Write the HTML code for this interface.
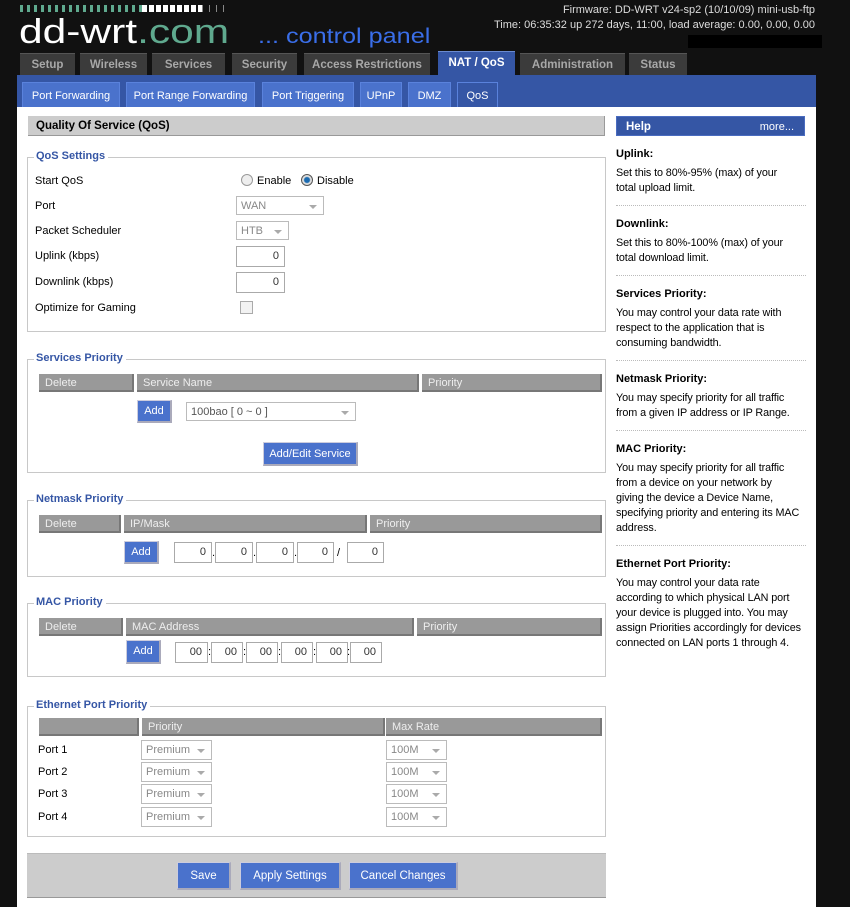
<!DOCTYPE html>
<html><head><meta charset="utf-8"><style>
*{box-sizing:border-box;margin:0;padding:0}
body{width:850px;height:907px;background:#111;font-family:"Liberation Sans",sans-serif;font-size:11px;color:#000;position:relative;overflow:hidden}
.a{position:absolute}
.tab{position:absolute;top:53px;height:22px;background:#3b3b3b;color:#a8a8a8;font-weight:bold;font-size:11.5px;text-align:center;line-height:23px;border-top:1px solid #555}
.sub{position:absolute;top:82px;height:25px;background:#4a72cc;color:#fff;font-size:11px;text-align:center;line-height:26px;border:1px solid #5a82dc;border-bottom:none}
.fs{position:absolute;border:1px solid #c8c8c8;left:27px;width:579px}
.lg{position:absolute;top:-8px;left:6px;background:#fff;padding:0 3px 0 2px;color:#3556a5;font-weight:bold;font-size:11px}
.th{position:absolute;height:18px;background:#999;color:#eee;font-size:11px;line-height:18px;padding-left:6px;border-right:2px solid #777;border-bottom:2px solid #777}
.btn{position:absolute;background:#4a72cc;color:#fff;font-size:11px;text-align:center;border-right:2px solid #aab;border-bottom:2px solid #aab;border-top:1px solid #ccd;border-left:1px solid #ccd}
.inp{position:absolute;border:1px solid #aaa;background:#fff;text-align:right;padding-right:5px;font-size:11px;line-height:19px;color:#333}
.sel{position:absolute;border:1px solid #bbb;background:#fff;color:#888;font-size:11px;padding-left:4px;line-height:18px}
.sel:after{content:"";position:absolute;right:6px;top:8px;border-left:4px solid transparent;border-right:4px solid transparent;border-top:4px solid #aaa}
.lbl{position:absolute;left:35px;font-size:11px}
.hh{position:absolute;left:616px;font-weight:bold;font-size:11px}
.ht{position:absolute;left:616px;font-size:10.8px;line-height:15px;width:200px;letter-spacing:-0.1px}
.dot{position:absolute;left:616px;width:190px;border-top:1px dotted #bbb}
</style></head><body>
<!-- logo -->
<div class="a" style="left:20px;top:5px;width:122px;height:7px;background:repeating-linear-gradient(90deg,#5fa98e 0 3px,transparent 3px 7px)"></div>
<div class="a" style="left:142px;top:5px;width:60px;height:7px;background:repeating-linear-gradient(90deg,#fff 0 5px,transparent 5px 7px)"></div>
<div class="a" style="left:202px;top:5px;width:24px;height:7px;background:repeating-linear-gradient(90deg,#888 0 1px,transparent 1px 7px)"></div>
<div class="a" style="left:19px;top:15px;font-size:34px;line-height:34px;color:#fff;transform:scaleX(1.25);transform-origin:left;white-space:nowrap">dd-wrt<span style="color:#5fa98e">.com</span></div>
<div class="a" style="left:258px;top:25px;font-size:21px;line-height:24px;color:#3a6ee8;transform:scaleX(1.2);transform-origin:left;white-space:nowrap">... control panel</div>
<div class="a" style="right:35px;top:3px;color:#ddd;font-size:11px;text-align:right;line-height:15px">Firmware: DD-WRT v24-sp2 (10/10/09) mini-usb-ftp<br>Time: 06:35:32 up 272 days, 11:00, load average: 0.00, 0.00, 0.00</div>
<div class="a" style="left:688px;top:35px;width:134px;height:13px;background:#000"></div>
<!-- tabs -->
<div class="tab" style="left:20px;width:55px">Setup</div>
<div class="tab" style="left:80px;width:67px">Wireless</div>
<div class="tab" style="left:152px;width:73px">Services</div>
<div class="tab" style="left:232px;width:65px">Security</div>
<div class="tab" style="left:304px;width:126px">Access Restrictions</div>
<div class="tab" style="left:438px;width:77px;top:51px;height:25px;background:#3556a5;color:#fff;border-top:1px solid #6a8ad0">NAT / QoS</div>
<div class="tab" style="left:520px;width:105px">Administration</div>
<div class="tab" style="left:629px;width:58px">Status</div>
<div class="a" style="left:17px;top:75px;width:799px;height:32px;background:#3556a5"></div>
<div class="sub" style="left:22px;width:98px">Port Forwarding</div>
<div class="sub" style="left:126px;width:129px">Port Range Forwarding</div>
<div class="sub" style="left:262px;width:92px">Port Triggering</div>
<div class="sub" style="left:360px;width:42px">UPnP</div>
<div class="sub" style="left:408px;width:43px">DMZ</div>
<div class="sub" style="left:457px;width:41px;background:#3556a5">QoS</div>
<!-- content -->
<div class="a" style="left:17px;top:107px;width:799px;height:800px;background:#fff"></div>
<div class="a" style="left:28px;top:116px;width:577px;height:20px;background:#ccc;border-right:1px solid #999;border-bottom:1px solid #999;font-weight:bold;font-size:11.5px;line-height:20px;padding-left:8px">Quality Of Service (QoS)</div>
<div class="a" style="left:616px;top:116px;width:189px;height:20px;background:#3556a5;color:#fff;line-height:20px;padding-left:9px;font-weight:bold;font-size:11.5px;border:1px solid #4a6cc0">Help<span style="position:absolute;right:10px;font-weight:normal;font-size:11px">more...</span></div>

<!-- QoS Settings -->
<div class="fs" style="top:157px;height:175px"><div class="lg">QoS Settings</div></div>
<div class="lbl" style="top:175px">Start QoS</div>
<div class="a" style="left:241px;top:174px;width:12px;height:12px;border-radius:50%;border:1px solid #999;background:#eee"></div>
<div class="a" style="left:257px;top:175px">Enable</div>
<div class="a" style="left:301px;top:174px;width:12px;height:12px;border-radius:50%;border:1px solid #555;background:radial-gradient(#1a6ab0 0 2.5px,#ddd 3.5px)"></div>
<div class="a" style="left:317px;top:175px">Disable</div>
<div class="lbl" style="top:200px">Port</div>
<div class="sel" style="left:236px;top:196px;width:88px;height:19px">WAN</div>
<div class="lbl" style="top:225px">Packet Scheduler</div>
<div class="sel" style="left:236px;top:221px;width:53px;height:19px">HTB</div>
<div class="lbl" style="top:250px">Uplink (kbps)</div>
<div class="inp" style="left:236px;top:246px;width:49px;height:21px">0</div>
<div class="lbl" style="top:276px">Downlink (kbps)</div>
<div class="inp" style="left:236px;top:272px;width:49px;height:21px">0</div>
<div class="lbl" style="top:302px">Optimize for Gaming</div>
<div class="a" style="left:240px;top:301px;width:13px;height:13px;border:1px solid #aaa;background:#f2f2f2"></div>

<!-- Services Priority -->
<div class="fs" style="top:359px;height:114px"><div class="lg">Services Priority</div></div>
<div class="th" style="left:39px;top:374px;width:95px">Delete</div>
<div class="th" style="left:137px;top:374px;width:282px">Service Name</div>
<div class="th" style="left:422px;top:374px;width:180px">Priority</div>
<div class="btn" style="left:137px;top:400px;width:35px;height:23px;line-height:20px">Add</div>
<div class="sel" style="left:186px;top:402px;width:170px;height:19px;color:#555">100bao [ 0 ~ 0 ]</div>
<div class="btn" style="left:263px;top:442px;width:95px;height:24px;line-height:22px">Add/Edit Service</div>

<!-- Netmask -->
<div class="fs" style="top:500px;height:77px"><div class="lg">Netmask Priority</div></div>
<div class="th" style="left:39px;top:515px;width:82px">Delete</div>
<div class="th" style="left:124px;top:515px;width:243px">IP/Mask</div>
<div class="th" style="left:370px;top:515px;width:232px">Priority</div>
<div class="btn" style="left:124px;top:541px;width:35px;height:23px;line-height:20px">Add</div>
<div class="inp" style="left:174px;top:542px;width:38px;height:21px">0</div><div class="a" style="left:212px;top:547px">.</div>
<div class="inp" style="left:215px;top:542px;width:38px;height:21px">0</div><div class="a" style="left:253px;top:547px">.</div>
<div class="inp" style="left:256px;top:542px;width:38px;height:21px">0</div><div class="a" style="left:294px;top:547px">.</div>
<div class="inp" style="left:297px;top:542px;width:37px;height:21px">0</div><div class="a" style="left:337px;top:547px">/</div>
<div class="inp" style="left:347px;top:542px;width:37px;height:21px">0</div>

<!-- MAC -->
<div class="fs" style="top:603px;height:74px"><div class="lg">MAC Priority</div></div>
<div class="th" style="left:39px;top:618px;width:84px">Delete</div>
<div class="th" style="left:126px;top:618px;width:288px">MAC Address</div>
<div class="th" style="left:417px;top:618px;width:185px">Priority</div>
<div class="btn" style="left:126px;top:640px;width:35px;height:24px;line-height:21px">Add</div>
<div class="inp" style="left:175px;top:642px;width:33px;height:21px">00</div><div class="a" style="left:208px;top:646px">:</div>
<div class="inp" style="left:211px;top:642px;width:32px;height:21px">00</div><div class="a" style="left:243px;top:646px">:</div>
<div class="inp" style="left:246px;top:642px;width:32px;height:21px">00</div><div class="a" style="left:278px;top:646px">:</div>
<div class="inp" style="left:281px;top:642px;width:32px;height:21px">00</div><div class="a" style="left:313px;top:646px">:</div>
<div class="inp" style="left:316px;top:642px;width:32px;height:21px">00</div><div class="a" style="left:347px;top:646px">:</div>
<div class="inp" style="left:350px;top:642px;width:32px;height:21px">00</div>

<!-- Ethernet -->
<div class="fs" style="top:706px;height:131px"><div class="lg">Ethernet Port Priority</div></div>
<div class="th" style="left:39px;top:718px;width:100px"></div>
<div class="th" style="left:142px;top:718px;width:243px">Priority</div>
<div class="th" style="left:386px;top:718px;width:216px">Max Rate</div>
<div class="lbl" style="left:38px;top:744px">Port 1</div>
<div class="lbl" style="left:38px;top:766px">Port 2</div>
<div class="lbl" style="left:38px;top:788px">Port 3</div>
<div class="lbl" style="left:38px;top:811px">Port 4</div>
<div class="sel" style="left:141px;top:740px;width:71px;height:20px">Premium</div>
<div class="sel" style="left:141px;top:762px;width:71px;height:20px">Premium</div>
<div class="sel" style="left:141px;top:784px;width:71px;height:20px">Premium</div>
<div class="sel" style="left:141px;top:807px;width:71px;height:20px">Premium</div>
<div class="sel" style="left:386px;top:740px;width:61px;height:20px">100M</div>
<div class="sel" style="left:386px;top:762px;width:61px;height:20px">100M</div>
<div class="sel" style="left:386px;top:784px;width:61px;height:20px">100M</div>
<div class="sel" style="left:386px;top:807px;width:61px;height:20px">100M</div>

<!-- button bar -->
<div class="a" style="left:27px;top:853px;width:579px;height:45px;background:#ccc;border-top:1px solid #bbb;border-bottom:1px solid #999"></div>
<div class="btn" style="left:177px;top:862px;width:54px;height:28px;line-height:26px;font-size:11.5px">Save</div>
<div class="btn" style="left:240px;top:862px;width:101px;height:28px;line-height:26px;font-size:11.5px">Apply Settings</div>
<div class="btn" style="left:349px;top:862px;width:109px;height:28px;line-height:26px;font-size:11.5px">Cancel Changes</div>

<!-- help -->
<div class="hh" style="top:148px">Uplink:</div>
<div class="ht" style="top:166px">Set this to 80%-95% (max) of your<br>total upload limit.</div>
<div class="dot" style="top:205px"></div>
<div class="hh" style="top:218px">Downlink:</div>
<div class="ht" style="top:236px">Set this to 80%-100% (max) of your<br>total download limit.</div>
<div class="dot" style="top:275px"></div>
<div class="hh" style="top:288px">Services Priority:</div>
<div class="ht" style="top:306px">You may control your data rate with<br>respect to the application that is<br>consuming bandwidth.</div>
<div class="dot" style="top:360px"></div>
<div class="hh" style="top:373px">Netmask Priority:</div>
<div class="ht" style="top:391px">You may specify priority for all traffic<br>from a given IP address or IP Range.</div>
<div class="dot" style="top:430px"></div>
<div class="hh" style="top:443px">MAC Priority:</div>
<div class="ht" style="top:461px">You may specify priority for all traffic<br>from a device on your network by<br>giving the device a Device Name,<br>specifying priority and entering its MAC<br>address.</div>
<div class="dot" style="top:545px"></div>
<div class="hh" style="top:558px">Ethernet Port Priority:</div>
<div class="ht" style="top:576px">You may control your data rate<br>according to which physical LAN port<br>your device is plugged into. You may<br>assign Priorities accordingly for devices<br>connected on LAN ports 1 through 4.</div>
</body></html>
